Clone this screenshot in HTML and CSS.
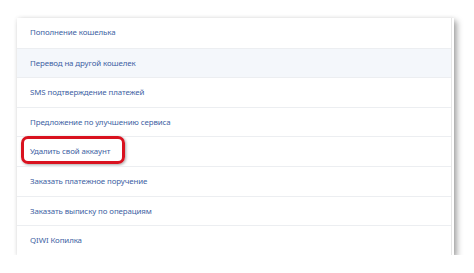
FILE: index.html
```html
<!DOCTYPE html>
<html>
<head>
<meta charset="UTF-8">
<title>Настройки</title>
<link rel="stylesheet" href="styles.css">
</head>
<body>

<div class="card">
    <ul class="menu">
        <li class="item">Пополнение кошелька</li>
        <li class="item active">Перевод на другой кошелек</li>
        <li class="item">SMS подтверждение платежей</li>
        <li class="item">Предложение по улучшению сервиса</li>
        <li class="item marked">
            Удалить свой аккаунт
            <!-- красная рамка -->
            <span class="mark"></span>
        </li>
        <li class="item">Заказать платежное поручение</li>
        <li class="item">Заказать выписку по операциям</li>
        <li class="item">QIWI Копилка</li>
    </ul>
    <div class="edge"></div>
</div>

</body>
</html>
```

FILE: styles.css
```css
body {
    margin: 0;
    padding: 18px 0 0 17px;
    background: #fff;
    font-family: "Noto Sans", "Open Sans", sans-serif;
}

/* карточка */
.card {
    display: flex;
    width: 437px;
    background: #fff;
    box-shadow: 3px 3px 6px rgba(0, 0, 0, 0.35), 0 0 4px rgba(0, 0, 0, 0.08);
}

/* список */
.menu {
    flex: 1;
    list-style: none;
    margin: 0;
    padding: 0;
}

.item {
    position: relative;
    height: 29.6px;
    line-height: 29px;
    padding-left: 13px;
    font-size: 7.9px;
    letter-spacing: -0.1px;
    color: #3e5fa3;
    border-top: 1px solid #eceef1;
    box-sizing: border-box;
}

.item:first-child {
    border-top: none;
}

.item.active {
    background: #f4f7fb;
}

/* красная рамка вокруг пункта */
.mark {
    position: absolute;
    left: 4px;
    top: -1px;
    width: 104px;
    height: 28px;
    border: 3px solid #d9121f;
    border-radius: 7px;
    box-sizing: border-box;
    box-shadow: 1px 1px 3px rgba(0, 0, 0, 0.35);
}

/* правая полоска */
.edge {
    width: 2px;
    border-left: 1px solid #e6e6e6;
}
```
